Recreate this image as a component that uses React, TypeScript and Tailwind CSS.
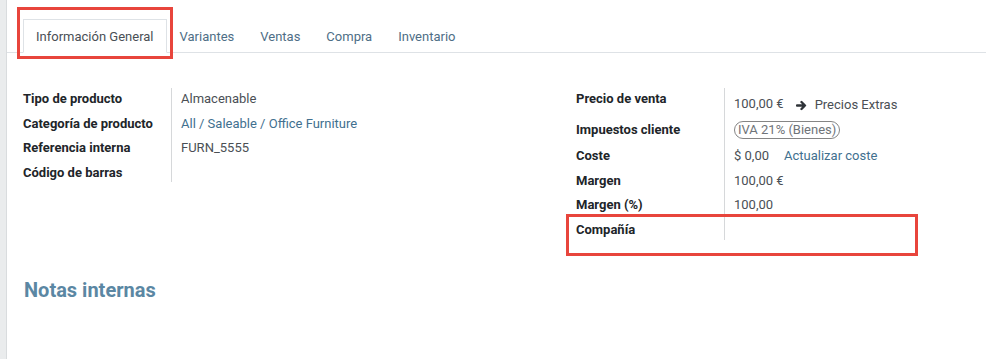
import React from "react";

const font = { fontFamily: 'Roboto, "Liberation Sans", sans-serif' };

function Row({ label, h, children }: { label: string; h: string; children?: React.ReactNode }) {
  return (
    <div className={`flex ${h}`}>
      <div className="w-[149px] shrink-0 border-r border-[#d6d8da] pt-[1px] text-[13px] leading-[20px] font-bold text-[#212529]">
        {label}
      </div>
      <div className="pl-[9px] pt-[1px] text-[13px] leading-[20px] text-[#4a4f55] flex-1">{children}</div>
    </div>
  );
}

export default function App() {
  return (
    <div className="relative w-[986px] h-[359px] bg-white flex overflow-hidden" style={font}>
      <div className="w-[7px] shrink-0 bg-[#eaeced] border-r border-[#d9dcde]" />
      <div className="flex-1 flex flex-col">
        {/* tabs */}
        <div className="mt-[19px] h-[34px] border-b border-[#dee2e6] flex pl-[16px]">
          <div className="h-[34px] -mb-px px-[12px] pt-[2px] border border-[#dee2e6] border-b-white bg-white flex items-center text-[13px] text-[#4a4f55]">
            Información General
          </div>
          {["Variantes", "Ventas", "Compra", "Inventario"].map((t) => (
            <div key={t} className="h-[33px] px-[13px] pt-[2px] flex items-center text-[13px] text-[#4e6e86]">
              {t}
            </div>
          ))}
        </div>

        {/* form groups */}
        <div className="mt-[35px] pl-[16px] flex">
          <div className="w-[553px] shrink-0 flex flex-col">
            <Row label="Tipo de producto" h="h-[25px]">Almacenable</Row>
            <Row label="Categoría de producto" h="h-[24px]">
              <span className="text-[#41708f]">All / Saleable / Office Furniture</span>
            </Row>
            <Row label="Referencia interna" h="h-[25px]">FURN_5555</Row>
            <Row label="Código de barras" h="h-[20px]" />
          </div>
          <div className="flex flex-col">
            <div className="flex h-[31px]">
              <div className="w-[149px] shrink-0 border-r border-[#d6d8da] pt-[1px] text-[13px] leading-[20px] font-bold text-[#212529]">
                Precio de venta
              </div>
              <div className="pl-[9px] flex items-start pt-[6px] text-[13px] leading-[20px] text-[#4a4f55]">
                <span>100,00 €</span>
                <span className="ml-[12px] flex items-center gap-[8px] text-[#4a4f55] pt-[1px]">
                  <svg width="11" height="11" viewBox="0 0 12 12" className="shrink-0">
                    <path
                      d="M1 6 H9.5 M6 2.2 L9.8 6 L6 9.8"
                      fill="none"
                      stroke="#2f3338"
                      strokeWidth="2.6"
                      strokeLinecap="round"
                      strokeLinejoin="round"
                    />
                  </svg>
                  <span>Precios Extras</span>
                </span>
              </div>
            </div>
            <Row label="Impuestos cliente" h="h-[26px]">
              <span className="inline-flex items-center h-[18px] px-[3px] rounded-full border-[1.5px] border-[#858585] text-[#6f7479] leading-[16px]">
                IVA 21% (Bienes)
              </span>
            </Row>
            <Row label="Coste" h="h-[25px]">
              <span>$ 0,00</span>
              <span className="ml-[15px] text-[#41708f]">Actualizar coste</span>
            </Row>
            <Row label="Margen" h="h-[24px]">100,00 €</Row>
            <Row label="Margen (%)" h="h-[25px]">100,00</Row>
            <Row label="Compañía" h="h-[21px]" />
          </div>
        </div>

        <div className="mt-[38px] pl-[17px] text-[20px] leading-[24px] font-bold text-[#5b87a3]">
          Notas internas
        </div>
      </div>

      {/* annotation boxes */}
      <div className="absolute left-[17px] top-[7px] w-[156px] h-[52px] border-[3px] border-[#e8453c]" />
      <div className="absolute left-[566px] top-[214px] w-[352px] h-[42px] border-[3px] border-[#e8453c]" />
    </div>
  );
}
